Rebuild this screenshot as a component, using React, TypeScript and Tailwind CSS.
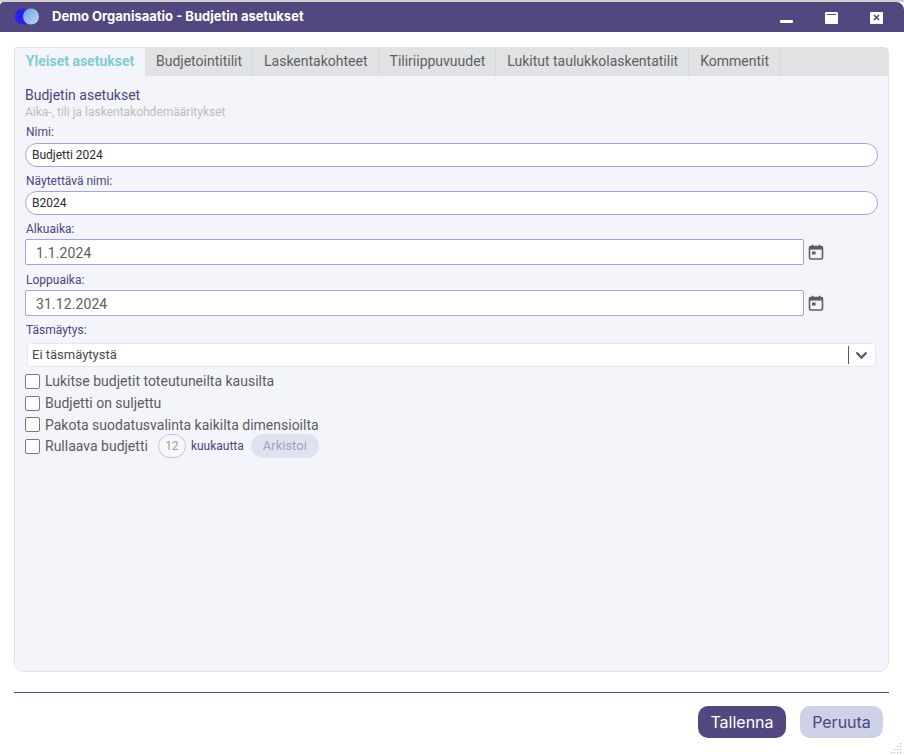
import React from "react";

const Cal = () => (
  <svg width="16" height="16" viewBox="0 0 16 16" className="shrink-0" fill="none">
    <rect x="1.5" y="2.5" width="13" height="12.5" rx="1.5" stroke="#5f5f5f" strokeWidth="1.6" />
    <rect x="1" y="2" width="14" height="3.6" fill="#5f5f5f" />
    <rect x="3.6" y="0.8" width="1.8" height="2" fill="#5f5f5f" />
    <rect x="10.6" y="0.8" width="1.8" height="2" fill="#5f5f5f" />
    <rect x="4" y="7.5" width="3.6" height="3" fill="#5f5f5f" />
  </svg>
);

const Check = ({ label, className = "h-[22px]" }: { label: string; className?: string }) => (
  <label className={`flex items-center ${className}`}>
    <span className="w-[15px] h-[15px] rounded-[2px] border border-[#7a7a7a] bg-white shrink-0" />
    <span className="ml-[5px] text-[14px] leading-[22px] text-[#5c5c5c]">{label}</span>
  </label>
);

const tabs = ["Budjetointitilit", "Laskentakohteet", "Tiliriippuvuudet", "Lukitut taulukkolaskentatilit", "Kommentit"];

const Label = ({ children, className = "" }: { children: React.ReactNode; className?: string }) => (
  <div className={`text-[12px] leading-[14px] text-[#4e4480] pl-[1px] ${className}`}>{children}</div>
);

const DateRow = ({ value }: { value: string }) => (
  <div className="flex items-center">
    <div className="w-[779px] h-[26px] bg-white border border-[#a6a3d6] rounded-[2px] pl-[10px] text-[14px] leading-[26px] text-[#5f5f5f] tracking-[0.1px]">
      {value}
    </div>
    <span className="ml-[4px]"><Cal /></span>
  </div>
);

export default function App() {
  return (
    <div className="w-[904px] h-[755px] bg-white overflow-hidden relative font-['Roboto',sans-serif]">
      <div className="h-[2px] bg-[#cfcfcf]" />
      <div className="h-[30px] bg-[#52477e] rounded-tr-[8px] rounded-tl-[4px] flex items-center pl-[14px]">
        <svg width="26" height="18" viewBox="0 0 26 18">
          <defs>
            <linearGradient id="g" x1="0" y1="0" x2="1" y2="1">
              <stop offset="0" stopColor="#6aa0f0" />
              <stop offset="1" stopColor="#c2d8ea" />
            </linearGradient>
          </defs>
          <circle cx="9" cy="8.5" r="8" fill="#2a20ee" />
          <circle cx="17" cy="8.5" r="8" fill="url(#g)" />
        </svg>
        <span className="ml-[12px] mb-[1px] text-[13px] font-bold text-white font-['Inter',sans-serif] whitespace-nowrap">
          Demo Organisaatio - Budjetin asetukset
        </span>
        <div className="ml-auto flex items-center">
          <span className="w-[13px] h-[3px] bg-white mt-[8px] mr-[32px] rounded-[1px]" />
          <span className="w-[13px] h-[12px] bg-white mr-[32px] mt-[1px] rounded-[1px] flex flex-col">
            <span className="mt-[2px] h-[1px] mx-[2px] bg-[#52477e]" />
          </span>
          <span className="w-[13px] h-[12px] bg-white mr-[21px] mt-[1px] rounded-[1px] flex items-center justify-center text-[#52477e]">
            <svg width="7" height="7" viewBox="0 0 7 7"><path d="M1 1l5 5M6 1L1 6" stroke="#52477e" strokeWidth="1.6" /></svg>
          </span>
        </div>
      </div>

      <div className="ml-[14px] mr-[15px] mt-[15px] h-[625px] border border-[#e2e3e7] rounded-[10px] rounded-tl-[3px] rounded-tr-[5px] bg-[#f4f5fa] overflow-hidden">
        <div className="h-[28px] bg-[#e1e2e4] flex">
          <div className="w-[130px] bg-[#f4f5fa] text-center text-[14px] font-bold leading-[27px] text-[#7fccd2]">Yleiset asetukset</div>
          {tabs.map((t) => (
            <div key={t} className="pl-[11px] pr-[10px] h-[28px] text-[14px] leading-[27px] text-[#5f5f5f] border-r border-[#d6d7d9] whitespace-nowrap">
              {t}
            </div>
          ))}
        </div>
        <div className="pl-[10px] pr-[10px]">
          <div className="mt-[11px] text-[14px] leading-[16px] text-[#4e4480]">Budjetin asetukset</div>
          <div className="mt-[2px] text-[12px] leading-[14px] text-[#bdbdbd]">Aika-, tili ja laskentakohdemääritykset</div>
          <Label className="mt-[6px]">Nimi:</Label>
          <div className="mt-[4px] h-[24px] bg-white border border-[#a6a3d6] rounded-full pl-[6px] text-[12px] leading-[23px] text-[#2b2b2b]">Budjetti 2024</div>
          <Label className="mt-[7px]">Näytettävä nimi:</Label>
          <div className="mt-[3px] h-[24px] bg-white border border-[#a6a3d6] rounded-full pl-[6px] text-[12px] leading-[23px] text-[#2b2b2b]">B2024</div>
          <Label className="mt-[7px] mb-[3px]">Alkuaika:</Label>
          <DateRow value="1.1.2024" />
          <Label className="mt-[8px] mb-[3px]">Loppuaika:</Label>
          <DateRow value="31.12.2024" />
          <Label className="mt-[7px]">Täsmäytys:</Label>
          <div className="mt-[6px] ml-[2px] w-[849px] h-[24px] bg-white border border-[#e6e7ec] rounded-[4px] flex items-center pl-[4px] text-[13px] text-[#4a4a4a]">
            <span>Ei täsmäytystä</span>
            <span className="ml-auto w-px h-[18px] bg-[#5a5a5a]" />
            <svg width="26" height="20" viewBox="0 0 26 20" fill="none">
              <path d="M7.5 7.5L12.5 12.5L17.5 7.5" stroke="#5f5f5f" strokeWidth="2.4" />
            </svg>
          </div>
          <div className="mt-[3px] flex flex-col">
            <Check label="Lukitse budjetit toteutuneilta kausilta" />
            <Check label="Budjetti on suljettu" />
            <Check label="Pakota suodatusvalinta kaikilta dimensioilta" className="h-[21px]" />
            <div className="flex items-center h-[22px]">
              <Check label="Rullaava budjetti" />
              <span className="ml-[10px] w-[28px] h-[24px] rounded-full border border-[#c3c1e2] bg-[#f8f8fc] text-center text-[12px] leading-[22px] text-[#9a9a9a]">12</span>
              <span className="ml-[5px] text-[12px] text-[#4e4480]">kuukautta</span>
              <span className="ml-[7px] w-[68px] h-[24px] rounded-full bg-[#e0e2ef] text-center text-[13px] leading-[24px] text-[#a3a3bf]">Arkistoi</span>
            </div>
          </div>
        </div>
      </div>

      <div className="ml-[14px] mr-[15px] mt-[20px] border-t border-[#52477e]" />
      <div className="flex justify-end gap-[14px] pr-[21px] mt-[13px]">
        <button className="w-[88px] h-[32px] rounded-[10px] bg-[#52477e] text-white text-[16px] font-['Inter',sans-serif]">Tallenna</button>
        <button className="w-[83px] h-[32px] rounded-[10px] bg-[#ced2e9] text-[#4e4480] text-[16px] font-['Inter',sans-serif]">Peruuta</button>
      </div>
      <svg className="absolute right-[1px] bottom-[1px]" width="12" height="12" viewBox="0 0 12 12" fill="#b5b5b5">
        <rect x="9" y="1" width="1.2" height="1.2" /><rect x="6" y="4" width="1.2" height="1.2" /><rect x="9" y="4" width="1.2" height="1.2" />
        <rect x="3" y="7" width="1.2" height="1.2" /><rect x="6" y="7" width="1.2" height="1.2" /><rect x="9" y="7" width="1.2" height="1.2" />
        <rect x="0" y="10" width="1.2" height="1.2" /><rect x="3" y="10" width="1.2" height="1.2" /><rect x="6" y="10" width="1.2" height="1.2" /><rect x="9" y="10" width="1.2" height="1.2" />
      </svg>
    </div>
  );
}
